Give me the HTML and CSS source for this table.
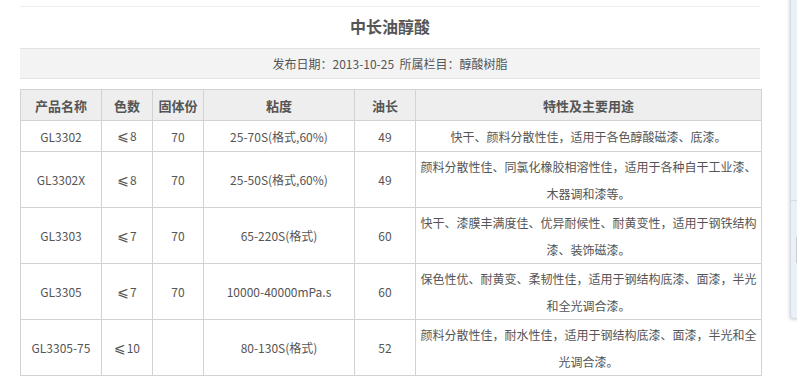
FILE: index.html
```html
<!DOCTYPE html>
<html lang="zh-CN">
<head>
<meta charset="utf-8">
<title>中长油醇酸</title>
<link rel="stylesheet" href="styles.css">
</head>
<body>
<div class="article">
  <h1 class="title">中长油醇酸</h1>
  <div class="meta">发布日期：2013-10-25&nbsp;&nbsp;所属栏目：醇酸树脂</div>
  <table class="spec">
    <colgroup>
      <col class="c1"><col class="c2"><col class="c3"><col class="c4"><col class="c5"><col class="c6">
    </colgroup>
    <thead>
      <tr class="head"><th>产品名称</th><th>色数</th><th>固体份</th><th>粘度</th><th>油长</th><th>特性及主要用途</th></tr>
    </thead>
    <tbody>
      <tr class="r1"><td>GL3302</td><td><span class="le">⩽</span>8</td><td>70</td><td>25-70S(格式,60%)</td><td>49</td><td>快干、颜料分散性佳，适用于各色醇酸磁漆、底漆。</td></tr>
      <tr class="r2"><td>GL3302X</td><td><span class="le">⩽</span>8</td><td>70</td><td>25-50S(格式,60%)</td><td>49</td><td>颜料分散性佳、同氯化橡胶相溶性佳，适用于各种自干工业漆、木器调和漆等。</td></tr>
      <tr class="r2"><td>GL3303</td><td><span class="le">⩽</span>7</td><td>70</td><td>65-220S(格式)</td><td>60</td><td>快干、漆膜丰满度佳、优异耐候性、耐黄变性，适用于钢铁结构漆、装饰磁漆。</td></tr>
      <tr class="r2"><td>GL3305</td><td><span class="le">⩽</span>7</td><td>70</td><td>10000-40000mPa.s</td><td>60</td><td>保色性优、耐黄变、柔韧性佳，适用于钢结构底漆、面漆，半光和全光调合漆。</td></tr>
      <tr class="r2"><td>GL3305-75</td><td><span class="le">⩽</span>10</td><td></td><td>80-130S(格式)</td><td>52</td><td>颜料分散性佳，耐水性佳，适用于钢结构底漆、面漆，半光和全光调合漆。</td></tr>
    </tbody>
  </table>
</div>
<div class="sidepanel"><div class="sp-line"></div><div class="sp-grip"></div></div>
</body>
</html>
```
FILE: styles.css
```css
html, body {
  margin: 0;
  padding: 0;
  background: #fff;
}
body {
  font-family: "Noto Sans CJK SC", "DejaVu Sans", sans-serif;
  color: #555;
  font-size: 12px;
}
.article {
  width: 740px;
  margin: 6px 0 0 20px;
  border-top: 1px solid #eee;
}
.title {
  margin: 0;
  height: 41px;
  line-height: 39px;
  text-align: center;
  font-size: 16px;
  font-weight: bold;
  color: #555;
}
.meta {
  height: 29px;
  line-height: 30px;
  background: #f3f3f3;
  border-top: 1px solid #e3e3e3;
  border-bottom: 1px solid #e3e3e3;
  text-align: center;
  font-size: 12px;
  color: #555;
}
.spec {
  margin-top: 10px;
  width: 741px;
  border-collapse: collapse;
  table-layout: fixed;
}
.c1 { width: 81px; }
.c2 { width: 51px; }
.c3 { width: 51px; }
.c4 { width: 151px; }
.c5 { width: 61px; }
.c6 { width: 346px; }
.spec th, .spec td {
  border: 1px solid #d2d2d2;
  text-align: center;
  vertical-align: middle;
  padding: 0 3px;
  font-size: 12px;
}
.spec th {
  background: #eee;
  height: 30px;
  font-size: 13px;
  font-weight: bold;
  color: #555;
}
.spec td {
  line-height: 27px;
  color: #555;
}
.le {
  font-family: "DejaVu Sans", sans-serif;
  font-size: 14px;
  margin-right: 1px;
}
.r1 td { height: 30px; }
.r2 td { height: 55px; }
.sidepanel {
  position: absolute;
  left: 790px;
  top: -6px;
  width: 24px;
  height: 323px;
  background: #eaf0f8;
  border: 1px solid #d6dbe2;
  border-radius: 4px;
  box-shadow: -1px 1px 3px rgba(0,0,0,0.15);
}
.sp-line {
  position: absolute;
  left: 0;
  right: 0;
  top: 205px;
  border-top: 1px solid #d4dbe4;
}
.sp-grip {
  position: absolute;
  left: 5px;
  top: 242px;
  width: 2px;
  height: 26px;
  background: #c9cdd2;
}
```
